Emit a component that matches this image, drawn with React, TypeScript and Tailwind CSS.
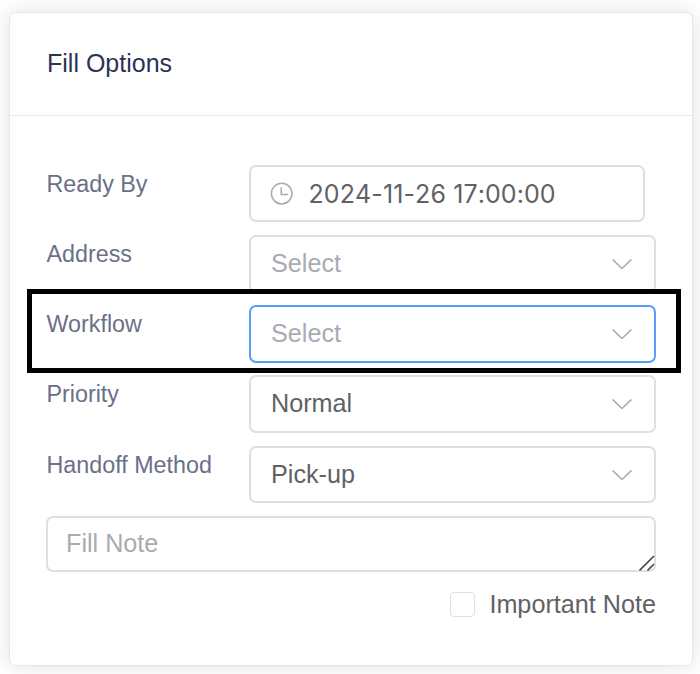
import React from "react";

function Chevron() {
  return (
    <svg className="mr-[22.5px] h-[12px] w-[20px] shrink-0" viewBox="0 0 20 12" fill="none" stroke="#a8abb2" strokeWidth="1.5" strokeLinecap="round" strokeLinejoin="round">
      <path d="M1 1.9 10 10.5 19 1.9" />
    </svg>
  );
}

function Clock() {
  return (
    <svg className="h-[24px] w-[24px] shrink-0" viewBox="0 0 24 24" fill="none" stroke="#a8abb2" strokeWidth="1.5" strokeLinecap="round">
      <circle cx="12.7" cy="11.6" r="10.3" />
      <path d="M12.2 5.8v6.6H18.6" />
    </svg>
  );
}

function Row({ label, tall = false, children }: { label: string; tall?: boolean; children: React.ReactNode }) {
  return (
    <div className={`flex items-start ${tall ? "h-[71px]" : "h-[70px]"}`}>
      <div className="w-[203px] shrink-0 pt-[5px] pl-[0.5px] text-[23.3px] leading-[28px] whitespace-nowrap text-[#6b7087]">{label}</div>
      {children}
    </div>
  );
}

function Select({ value, placeholder = false, active = false, tall = false }: { value: string; placeholder?: boolean; active?: boolean; tall?: boolean }) {
  return (
    <div className={`flex w-[407px] items-center justify-between rounded-[7px] border-2 bg-white pl-[20px] text-[25.2px] leading-[30px] ${tall ? "h-[58px]" : "h-[57px]"} ${active ? "border-[#5a9cf8]" : "border-[#dcdfe6]"} ${placeholder ? "text-[#a8abb2]" : "text-[#606266]"}`}>
      <span className="pb-[2px]">{value}</span>
      <Chevron />
    </div>
  );
}

export default function App() {
  return (
    <div className="relative h-[674px] w-[700px] overflow-hidden bg-white pt-[12px] pl-[9px] font-['Liberation_Sans',Arial,sans-serif]">
      <div className="h-[654px] w-[684px] rounded-[7px] border border-[#e4e7ed] bg-white shadow-[0_0_22px_rgba(0,0,0,0.12)]">
        <div className="flex h-[103px] items-center border-b border-[#e4e7ed] pb-[2px] pl-[37px] text-[25px] leading-[30px] text-[#2b3353]">
          Fill Options
        </div>
        <div className="pt-[49px] pl-[36px]">
          <Row label="Ready By">
            <div className="flex h-[57px] w-[396px] items-center rounded-[7px] border-2 border-[#dcdfe6] pl-[18px] text-[#606266]">
              <Clock />
              <span className="pt-[1px] pl-[15.5px] font-['Inter',sans-serif] text-[25px] leading-[30px] tracking-[0.1px] whitespace-nowrap [font-kerning:none]">2024-11-26 17:00:00</span>
            </div>
          </Row>
          <Row label="Address"><Select value="Select" placeholder tall /></Row>
          <Row label="Workflow"><Select value="Select" placeholder active tall /></Row>
          <Row label="Priority" tall><Select value="Normal" tall /></Row>
          <Row label="Handoff Method"><Select value="Pick-up" /></Row>
          <div className="relative h-[56px] w-[610px] rounded-[7px] border-2 border-[#dcdfe6] pt-[10px] pl-[18px] text-[25.2px] leading-[30px] text-[#a8abb2]">
            Fill Note
            <svg className="absolute right-[-1px] bottom-[-1px] h-[16px] w-[16px]" viewBox="0 0 16 16" fill="none" stroke="#484848" strokeWidth="1.6">
              <path d="M0.5 15.5 15 1M8.5 15.5 15 9" />
            </svg>
          </div>
          <div className="mt-[17px] flex w-[610px] items-center justify-end">
            <div className="mr-[14px] h-[25px] w-[25px] rounded-[4px] border border-[#dcdfe6]" />
            <span className="text-[25.2px] leading-[30px] text-[#606266]">Important Note</span>
          </div>
        </div>
      </div>
      <div className="absolute top-[289px] left-[27px] h-[84px] w-[654px] border-[5px] border-black" />
    </div>
  );
}
